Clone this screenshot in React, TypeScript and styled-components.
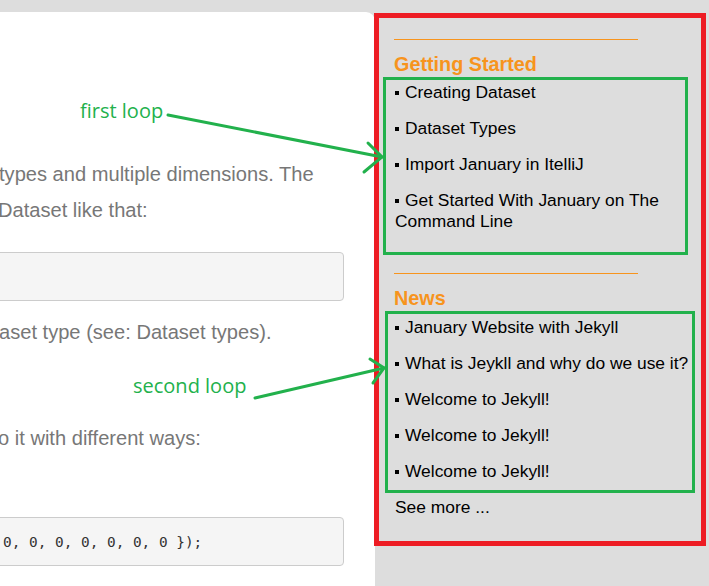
import React from "react";
import styled, { createGlobalStyle } from "styled-components";

const GlobalStyle = createGlobalStyle`
  html, body { margin: 0; padding: 0; background: #dddddd; }
  body { font-family: "Liberation Sans", Arial, sans-serif; overflow: hidden; }
  * { box-sizing: border-box; }
`;

const Page = styled.div`
  position: relative;
  display: flex;
  align-items: flex-start;
  width: 709px;
  height: 586px;
  padding-top: 12px;
  overflow: hidden;
`;

const MainPanel = styled.main`
  align-self: stretch;
  width: 375px;
  flex: none;
  background: #ffffff;
  border-top-right-radius: 9px;
  padding: 144px 31px 0 0;
  display: flex;
  flex-direction: column;
  overflow: hidden;
`;

const TextLine = styled.p<{ $shift: number; $top: number }>`
  margin: ${(p) => p.$top}px 0 0 ${(p) => p.$shift}px;
  font-size: 20.1px;
  line-height: 36px;
  color: #777777;
  white-space: nowrap;
`;

const CodeBlock = styled.pre<{ $top: number }>`
  margin: ${(p) => p.$top}px 0 0 -20px;
  height: 49px;
  padding: 0 0 0 22px;
  display: flex;
  align-items: center;
  background: #f5f5f5;
  border: 1px solid #cccccc;
  border-radius: 4px;
  font-family: "DejaVu Sans Mono", "Liberation Mono", monospace;
  font-size: 14.4px;
  color: #333333;
  white-space: pre;
  overflow: hidden;
`;

const Sidebar = styled.aside`
  flex: none;
  margin: 1px 0 0 -1px;
  width: 332px;
  height: 533px;
  border: 5px solid #ed1c24;
  padding: 21px 0 0 15px;
  display: flex;
  flex-direction: column;
`;

const Rule = styled.div<{ $top: number }>`
  margin-top: ${(p) => p.$top}px;
  width: 244px;
  height: 0;
  border-top: 1px solid #f7941d;
`;

const SectionTitle = styled.h2`
  margin: 13px 0 0 0;
  font-size: 19.8px;
  line-height: 22px;
  font-weight: bold;
  color: #f7941d;
`;

const LoopBox = styled.ul<{
  $left: number;
  $width: number;
  $padLeft: number;
  $padTop: number;
  $padBottom: number;
}>`
  list-style: none;
  margin: 2px 0 0 ${(p) => p.$left}px;
  width: ${(p) => p.$width}px;
  border: 3px solid #22b14c;
  padding: ${(p) => p.$padTop}px 0 ${(p) => p.$padBottom}px ${(p) => p.$padLeft}px;
  display: flex;
  flex-direction: column;
  gap: 15px;
`;

const Item = styled.li`
  font-size: 17.4px;
  line-height: 21px;
  color: #000000;
`;

const Bullet = styled.span`
  display: inline-block;
  width: 4px;
  height: 4px;
  background: #000000;
  margin-right: 6px;
  vertical-align: middle;
`;

const SeeMore = styled.div`
  margin: 4px 0 0 1px;
  font-size: 17.4px;
  line-height: 21px;
  color: #000000;
`;

const Label = styled.span<{ $x: number; $y: number }>`
  position: absolute;
  left: ${(p) => p.$x}px;
  top: ${(p) => p.$y}px;
  font-family: "Open Sans", "Noto Sans", sans-serif;
  font-size: 20px;
  line-height: 24px;
  color: #22b14c;
  white-space: nowrap;
`;

const Overlay = styled.svg`
  position: absolute;
  left: 0;
  top: 0;
  pointer-events: none;
`;

const gettingStarted = [
  "Creating Dataset",
  "Dataset Types",
  "Import January in ItelliJ",
  "Get Started With January on The Command Line",
];

const news = [
  "January Website with Jekyll",
  "What is Jeykll and why do we use it?",
  "Welcome to Jekyll!",
  "Welcome to Jekyll!",
  "Welcome to Jekyll!",
];

export default function App() {
  return (
    <>
      <GlobalStyle />
      <Page>
        <MainPanel>
          <TextLine $shift={-1} $top={0}>types and multiple dimensions. The</TextLine>
          <TextLine $shift={-2} $top={0}>Dataset like that:</TextLine>
          <CodeBlock $top={24}>{" "}</CodeBlock>
          <TextLine $shift={-1} $top={13}>aset type (see: Dataset types).</TextLine>
          <TextLine $shift={-2} $top={70}>o it with different ways:</TextLine>
          <CodeBlock $top={61}>0, 0, 0, 0, 0, 0, 0 {"});"}</CodeBlock>
        </MainPanel>
        <Sidebar>
          <Rule $top={0} />
          <SectionTitle>Getting Started</SectionTitle>
          <LoopBox $left={-11} $width={305} $padLeft={9} $padTop={2} $padBottom={20}>
            {gettingStarted.map((t, i) => (
              <Item key={i}>
                <Bullet />
                {t}
              </Item>
            ))}
          </LoopBox>
          <Rule $top={18} />
          <SectionTitle>News</SectionTitle>
          <LoopBox $left={-9} $width={310} $padLeft={7} $padTop={3} $padBottom={8}>
            {news.map((t, i) => (
              <Item key={i}>
                <Bullet />
                {t}
              </Item>
            ))}
          </LoopBox>
          <SeeMore>See more ...</SeeMore>
        </Sidebar>
        <Label $x={80} $y={99}>first loop</Label>
        <Label $x={133} $y={374}>second loop</Label>
        <Overlay width={709} height={586} viewBox="0 0 709 586">
          <g stroke="#22b14c" strokeWidth={3} fill="none" strokeLinecap="round">
            <line x1={168} y1={115} x2={382} y2={157} />
            <polyline points="368,143 382,157 364,172" />
            <line x1={255} y1={398} x2={384} y2={368} />
            <polyline points="370,359 384,368 373,383" />
          </g>
        </Overlay>
      </Page>
    </>
  );
}
